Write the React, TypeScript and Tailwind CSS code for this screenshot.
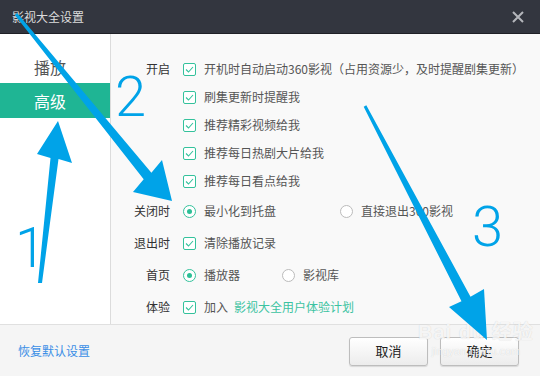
import React from 'react';

const font = { fontFamily: '"Noto Sans CJK SC", "Noto Sans", sans-serif' };
const digitFont = { fontFamily: 'Roboto, "Liberation Sans", sans-serif' };

const CheckBox: React.FC = () => (
  <span className="w-[13px] h-[13px] shrink-0 border border-[#34c29c] rounded-[2px] bg-white flex items-center justify-center">
    <svg width="9" height="7" viewBox="0 0 9 7" fill="none">
      <path d="M1 3.5 L3.5 6 L8 1" stroke="#34c29c" strokeWidth="1.1" />
    </svg>
  </span>
);

const Radio: React.FC<{ on?: boolean }> = ({ on }) => (
  <span
    className={
      on
        ? 'w-[13px] h-[13px] shrink-0 rounded-full border border-[#34c29c] bg-white flex items-center justify-center'
        : 'w-[13px] h-[13px] shrink-0 rounded-full border border-[#bbbbbb] bg-white'
    }
  >
    {on && <span className="w-[5px] h-[5px] rounded-full bg-[#2cbf96]" />}
  </span>
);

const Row: React.FC<{ label?: string; tall?: boolean; children: React.ReactNode }> = ({ label, tall, children }) => (
  <div className={tall ? 'flex items-center h-[32px]' : 'flex items-center h-[28px]'}>
    <div className="w-[60px] text-right text-[#333] pr-px">{label}</div>
    <div className="flex items-center pl-[12px] text-[#555]">{children}</div>
  </div>
);

const Opt: React.FC<{ children: React.ReactNode }> = ({ children }) => (
  <span className="flex items-center gap-[8px]">{children}</span>
);

export default function App() {
  return (
    <div className="relative w-[540px] h-[376px] overflow-hidden flex flex-col text-[12px]" style={font}>
      {/* title bar */}
      <div className="h-[34px] bg-[#33363f] border-b border-[#1f2026] flex items-center justify-between pl-[12px] pr-[16px]">
        <span className="text-[#dcdcdc] text-[12px]">影视大全设置</span>
        <svg width="12" height="12" viewBox="0 0 12 12">
          <path d="M1 1 L11 11 M11 1 L1 11" stroke="#b4b6bb" strokeWidth="2" />
        </svg>
      </div>

      <div className="flex h-[290px]">
        {/* sidebar */}
        <div className="w-[111px] bg-white border-r border-[#dcdcdc] pt-[16px] text-[16px]">
          <div className="h-[33px] flex items-center justify-center text-[#555] pr-[10px]">播放</div>
          <div className="h-[35px] flex items-center justify-center bg-[#1fb594] text-white pr-[10px]">高级</div>
        </div>

        {/* content */}
        <div className="flex-1 bg-[#f9f9f9] pt-[21px]">
          <Row label="开启">
            <Opt><CheckBox />开机时自动启动360影视（占用资源少，及时提醒剧集更新）</Opt>
          </Row>
          <Row><Opt><CheckBox />刷集更新时提醒我</Opt></Row>
          <Row><Opt><CheckBox />推荐精彩视频给我</Opt></Row>
          <Row><Opt><CheckBox />推荐每日热剧大片给我</Opt></Row>
          <Row><Opt><CheckBox />推荐每日看点给我</Opt></Row>
          <Row label="关闭时" tall>
            <span className="w-[157px]"><Opt><Radio on />最小化到托盘</Opt></span>
            <Opt><Radio />直接退出360影视</Opt>
          </Row>
          <Row label="退出时" tall>
            <Opt><CheckBox />清除播放记录</Opt>
          </Row>
          <Row label="首页" tall>
            <span className="w-[99px]"><Opt><Radio on />播放器</Opt></span>
            <Opt><Radio />影视库</Opt>
          </Row>
          <Row label="体验" tall>
            <Opt><CheckBox />加入<span className="text-[#3cc3a1] -ml-[2px]">影视大全用户体验计划</span></Opt>
          </Row>
        </div>
      </div>

      {/* footer */}
      <div className="flex-1 bg-[#f5f5f5] border-t border-[#e0e0e0] flex items-center justify-between pl-[18px] pr-[21px]">
        <span className="text-[#3a8ee6]">恢复默认设置</span>
        <div className="flex gap-[12px] pt-[1px]">
          <button className="w-[79px] h-[29px] rounded-[3px] border border-[#bdbdbd] bg-gradient-to-b from-white to-[#ececec] shadow-[0_1px_1px_rgba(0,0,0,0.12)] text-[#222] text-[13px]">取消</button>
          <button className="w-[79px] h-[29px] rounded-[3px] border border-[#bdbdbd] bg-gradient-to-b from-white to-[#ececec] shadow-[0_1px_1px_rgba(0,0,0,0.12)] text-[#222] text-[13px]">确定</button>
        </div>
      </div>

      {/* watermark */}
      <div className="absolute left-[418px] top-[322px] pointer-events-none flex flex-col items-center leading-none text-white/80 [text-shadow:0_0_1px_rgba(0,0,0,0.18)]">
        <span className="text-[20px] font-bold tracking-[1px]" style={{ fontFamily: '"Liberation Sans", "Noto Sans CJK SC", sans-serif' }}>Bai du 经验</span>
        <span className="text-[11px] mt-[4px]" style={{ fontFamily: '"Liberation Sans", sans-serif' }}>jingyan.baidu.com</span>
      </div>

      {/* annotation arrows */}
      <svg className="absolute inset-0 pointer-events-none" width="540" height="376" viewBox="0 0 540 376">
        <polygon fill="#00a3e8" points="38,283 50.5,158.1 37,154 58,121 72,163 58.5,158.9 42,283" />
        <polygon fill="#00a3e8" points="17.2,13 151.4,172.8 162,160 172,201 133,192 143.7,179.2 14.8,15" />
        <polygon fill="#00a3e8" points="366.3,105.3 470.5,296.7 484,289 487,340 449,307 461.5,301.3 363.7,106.7" />
      </svg>
      <span className="absolute left-[15px] top-[214px] text-[56px] font-light leading-[68px] text-[#00a3e8]" style={digitFont}>1</span>
      <span className="absolute left-[115px] top-[63px] text-[56px] font-light leading-[68px] text-[#00a3e8]" style={digitFont}>2</span>
      <span className="absolute left-[472px] top-[193px] text-[56px] font-light leading-[68px] text-[#00a3e8]" style={digitFont}>3</span>
    </div>
  );
}
